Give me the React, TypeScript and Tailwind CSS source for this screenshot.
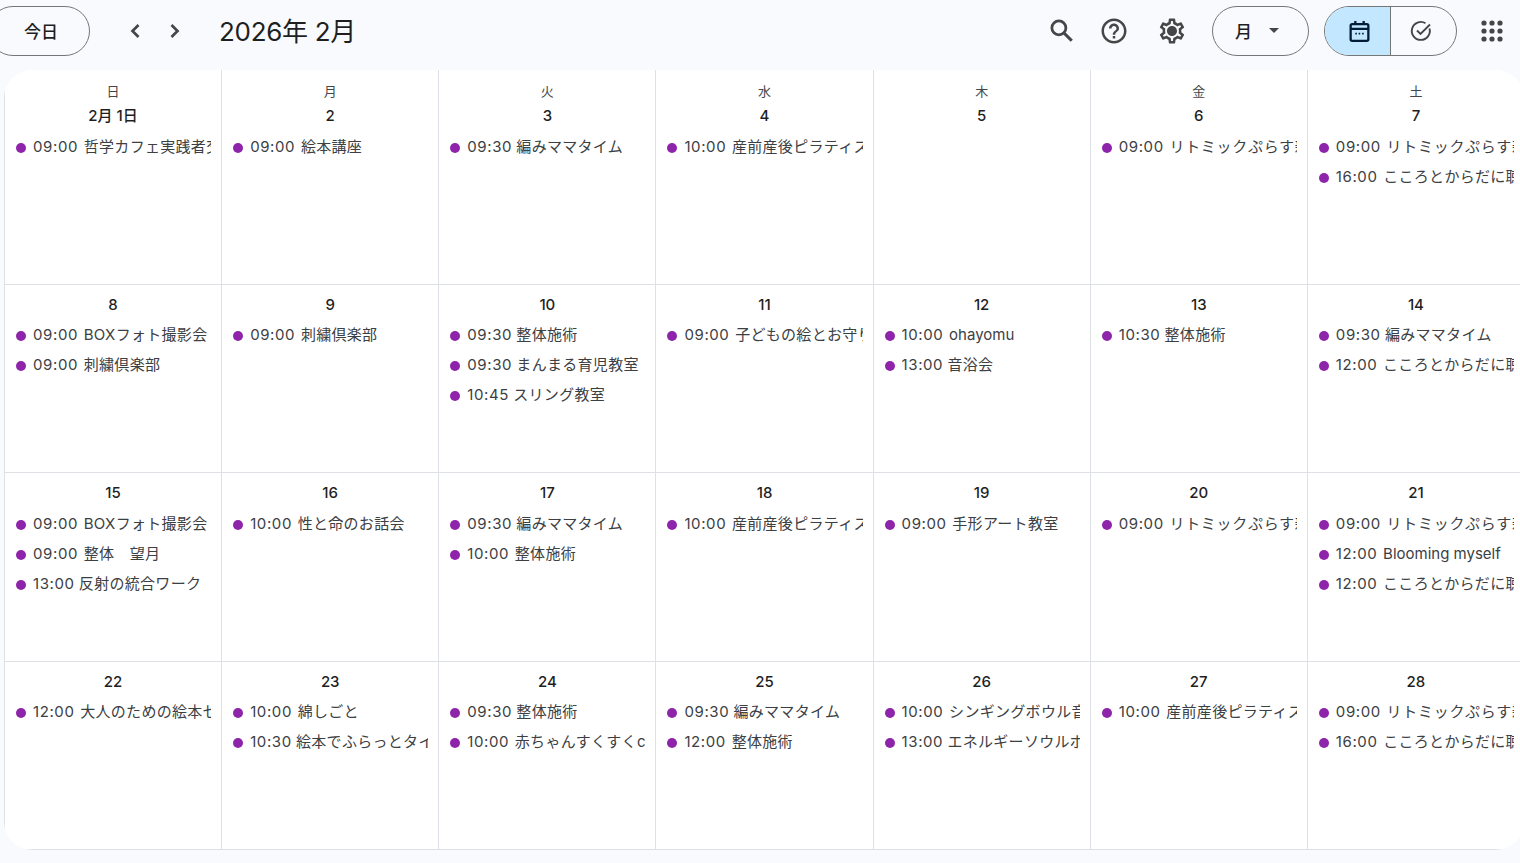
import React from "react";
import { MdHelpOutline, MdOutlineSettings, MdArrowDropDown } from "react-icons/md";

const FONT = { fontFamily: '"Inter", "Noto Sans CJK JP", sans-serif' };

const weeks: { label: string; events: string[] }[][] = [
  [
    { label: "2月 1日", events: ["09:00 哲学カフェ実践者交流会"] },
    { label: "2", events: ["09:00 絵本講座"] },
    { label: "3", events: ["09:30 編みママタイム"] },
    { label: "4", events: ["10:00 産前産後ピラティス"] },
    { label: "5", events: [] },
    { label: "6", events: ["09:00 リトミックぷらす親子"] },
    { label: "7", events: ["09:00 リトミックぷらす親子", "16:00 こころとからだに聴く"] },
  ],
  [
    { label: "8", events: ["09:00 BOXフォト撮影会", "09:00 刺繍倶楽部"] },
    { label: "9", events: ["09:00 刺繍倶楽部"] },
    { label: "10", events: ["09:30 整体施術", "09:30 まんまる育児教室", "10:45 スリング教室"] },
    { label: "11", events: ["09:00 子どもの絵とお守り"] },
    { label: "12", events: ["10:00 ohayomu", "13:00 音浴会"] },
    { label: "13", events: ["10:30 整体施術"] },
    { label: "14", events: ["09:30 編みママタイム", "12:00 こころとからだに聴く"] },
  ],
  [
    { label: "15", events: ["09:00 BOXフォト撮影会", "09:00 整体　望月", "13:00 反射の統合ワーク"] },
    { label: "16", events: ["10:00 性と命のお話会"] },
    { label: "17", events: ["09:30 編みママタイム", "10:00 整体施術"] },
    { label: "18", events: ["10:00 産前産後ピラティス"] },
    { label: "19", events: ["09:00 手形アート教室"] },
    { label: "20", events: ["09:00 リトミックぷらす親子"] },
    { label: "21", events: ["09:00 リトミックぷらす親子", "12:00 Blooming myself", "12:00 こころとからだに聴く"] },
  ],
  [
    { label: "22", events: ["12:00 大人のための絵本セラピー"] },
    { label: "23", events: ["10:00 綿しごと", "10:30 絵本でふらっとタイム"] },
    { label: "24", events: ["09:30 整体施術", "10:00 赤ちゃんすくすくclub"] },
    { label: "25", events: ["09:30 編みママタイム", "12:00 整体施術"] },
    { label: "26", events: ["10:00 シンギングボウル音浴", "13:00 エネルギーソウルボディ"] },
    { label: "27", events: ["10:00 産前産後ピラティス"] },
    { label: "28", events: ["09:00 リトミックぷらす親子", "16:00 こころとからだに聴く"] },
  ],
];
const days = ["日", "月", "火", "水", "木", "金", "土"];
const rowHeights = ["h-[215px]", "h-[188px]", "h-[189px]", "h-[188px]"];
const listOffset = ["mt-[7px]", "mt-[6px]", "mt-[7px]", "mt-[6px]"];

function titleClass(title: string) {
  if (title.startsWith("リトミック")) return "tracking-[0.7px]";
  if (/^[A-Za-z ]+$/.test(title)) return "tracking-[0px]";
  return "tracking-[0.3px]";
}

function Event({ text }: { text: string }) {
  const time = text.slice(0, 5);
  const title = text.slice(6);
  return (
    <div className="h-[30px] flex items-center pl-[11px] pr-[10px] overflow-hidden">
      <span className="w-[10px] h-[10px] rounded-full bg-[#8e24aa] shrink-0 translate-y-[1px]" />
      <span className="ml-[7px] text-[15px] text-[#3c4043] whitespace-nowrap overflow-hidden">
        <span className="tracking-[0.6px]">{time}</span>{" "}
        <span className={`${/[34]/.test(time) ? "ml-0" : "ml-[1.5px]"} ${titleClass(title)}`}>{title}</span>
      </span>
    </div>
  );
}

function Cell({ label, events, head, row }: { label: string; events: string[]; head?: string; row: number }) {
  return (
    <div className="min-w-0 overflow-hidden border-b border-l border-[#dde1e6] flex flex-col">
      {head && <div className="text-center text-[13px] leading-[16px] text-[#444746] mt-[13px] mb-[8px]">{head}</div>}
      <div className={`text-center text-[15px] leading-[18px] font-medium text-[#1f1f1f] ${head ? "" : "mt-[11px]"}`}>{label}</div>
      <div className={`${listOffset[row]} flex flex-col`}>
        {events.map((e) => (
          <Event key={e} text={e} />
        ))}
      </div>
    </div>
  );
}

export default function App() {
  return (
    <div style={FONT} className="w-[1520px] h-[863px] overflow-hidden bg-[#f8fafd]">
      <header className="h-[70px] flex items-start pt-[6px]">
        <button className="ml-[-12px] w-[102px] h-[50px] rounded-full border border-[#747775] pl-[4px] pt-[3px] text-[17px] font-medium text-[#1f1f1f]">今日</button>
        <div className="ml-[31px] h-[50px] flex items-center gap-[12px]">
          <svg width="28" height="28" viewBox="0 0 28 28" fill="none" stroke="#444746" strokeWidth="2.7">
            <path d="M17.5 8 11.5 14l6 6" />
          </svg>
          <svg width="28" height="28" viewBox="0 0 28 28" fill="none" stroke="#444746" strokeWidth="2.7">
            <path d="M10.5 8 16.5 14l-6 6" />
          </svg>
        </div>
        <h1 className="ml-[30px] h-[50px] pt-[1px] leading-[50px] text-[26px] tracking-[-0.3px] font-normal text-[#1f1f1f]">2026年 2月</h1>
        <div className="ml-auto h-[50px] flex items-center">
          <svg width="30" height="30" viewBox="0 0 24 24" fill="none" stroke="#444746">
            <circle cx="9.5" cy="9.5" r="5.6" strokeWidth="2.2" />
            <path d="M13.8 13.8l6 6" strokeWidth="2.5" />
          </svg>
          <MdHelpOutline size={30} className="ml-[22px] text-[#444746]" />
          <span className="relative ml-[28px] flex">
            <MdOutlineSettings size={30} className="text-[#444746]" />
            <span className="absolute left-[11px] top-[11px] w-[8px] h-[8px] rounded-full bg-[#444746]" />
          </span>
          <button className="ml-[25px] w-[97px] h-[50px] rounded-full border border-[#747775] flex items-center pl-[22px] text-[17px] font-medium text-[#1f1f1f]">
            <span className="pt-[3px]">月</span>
            <MdArrowDropDown size={24} className="ml-[10px] -translate-y-[1px] text-[#444746]" />
          </button>
          <div className="ml-[15px] w-[133px] h-[50px] rounded-full border border-[#747775] flex overflow-hidden">
            <div className="w-[66px] bg-[#c2e7ff] border-r border-[#747775] flex items-center justify-center pl-[3px]">
              <svg width="25" height="25" viewBox="0 0 24 24" fill="none" stroke="#001d35" strokeWidth="2.2">
                <rect x="3.5" y="5" width="17" height="16" rx="1.5" />
                <path d="M3.5 9.5h17M8 2v3.5M16 2v3.5" />
                <path d="M8 14h1.5M11.2 14h1.5M14.5 14H16" strokeWidth="1.8" />
              </svg>
            </div>
            <div className="flex-1 flex items-center justify-center pr-[5px]">
              <svg width="24" height="24" viewBox="0 0 24 24" fill="none" stroke="#444746" strokeWidth="1.9">
                <path d="M20.5 9.5A9 9 0 1 1 16.5 4.2" />
                <path d="M8 11.5l3.5 3.5L21 5.5" />
              </svg>
            </div>
          </div>
          <svg width="22" height="22" viewBox="0 0 22 22" fill="#444746" className="ml-[24px] mr-[17px]">
            {[3, 11, 19].map((y) =>
              [3, 11, 19].map((x) => <circle key={`${x}-${y}`} cx={x} cy={y} r="2.6" />)
            )}
          </svg>
        </div>
      </header>
      <main className="ml-[4px] w-[1520px] rounded-[28px] bg-white overflow-hidden">
        {weeks.map((w, i) => (
          <div key={i} className={`grid grid-cols-7 ${rowHeights[i]}`}>
            {w.map((c, j) => (
              <Cell key={j} label={c.label} events={c.events} head={i === 0 ? days[j] : undefined} row={i} />
            ))}
          </div>
        ))}
      </main>
    </div>
  );
}
